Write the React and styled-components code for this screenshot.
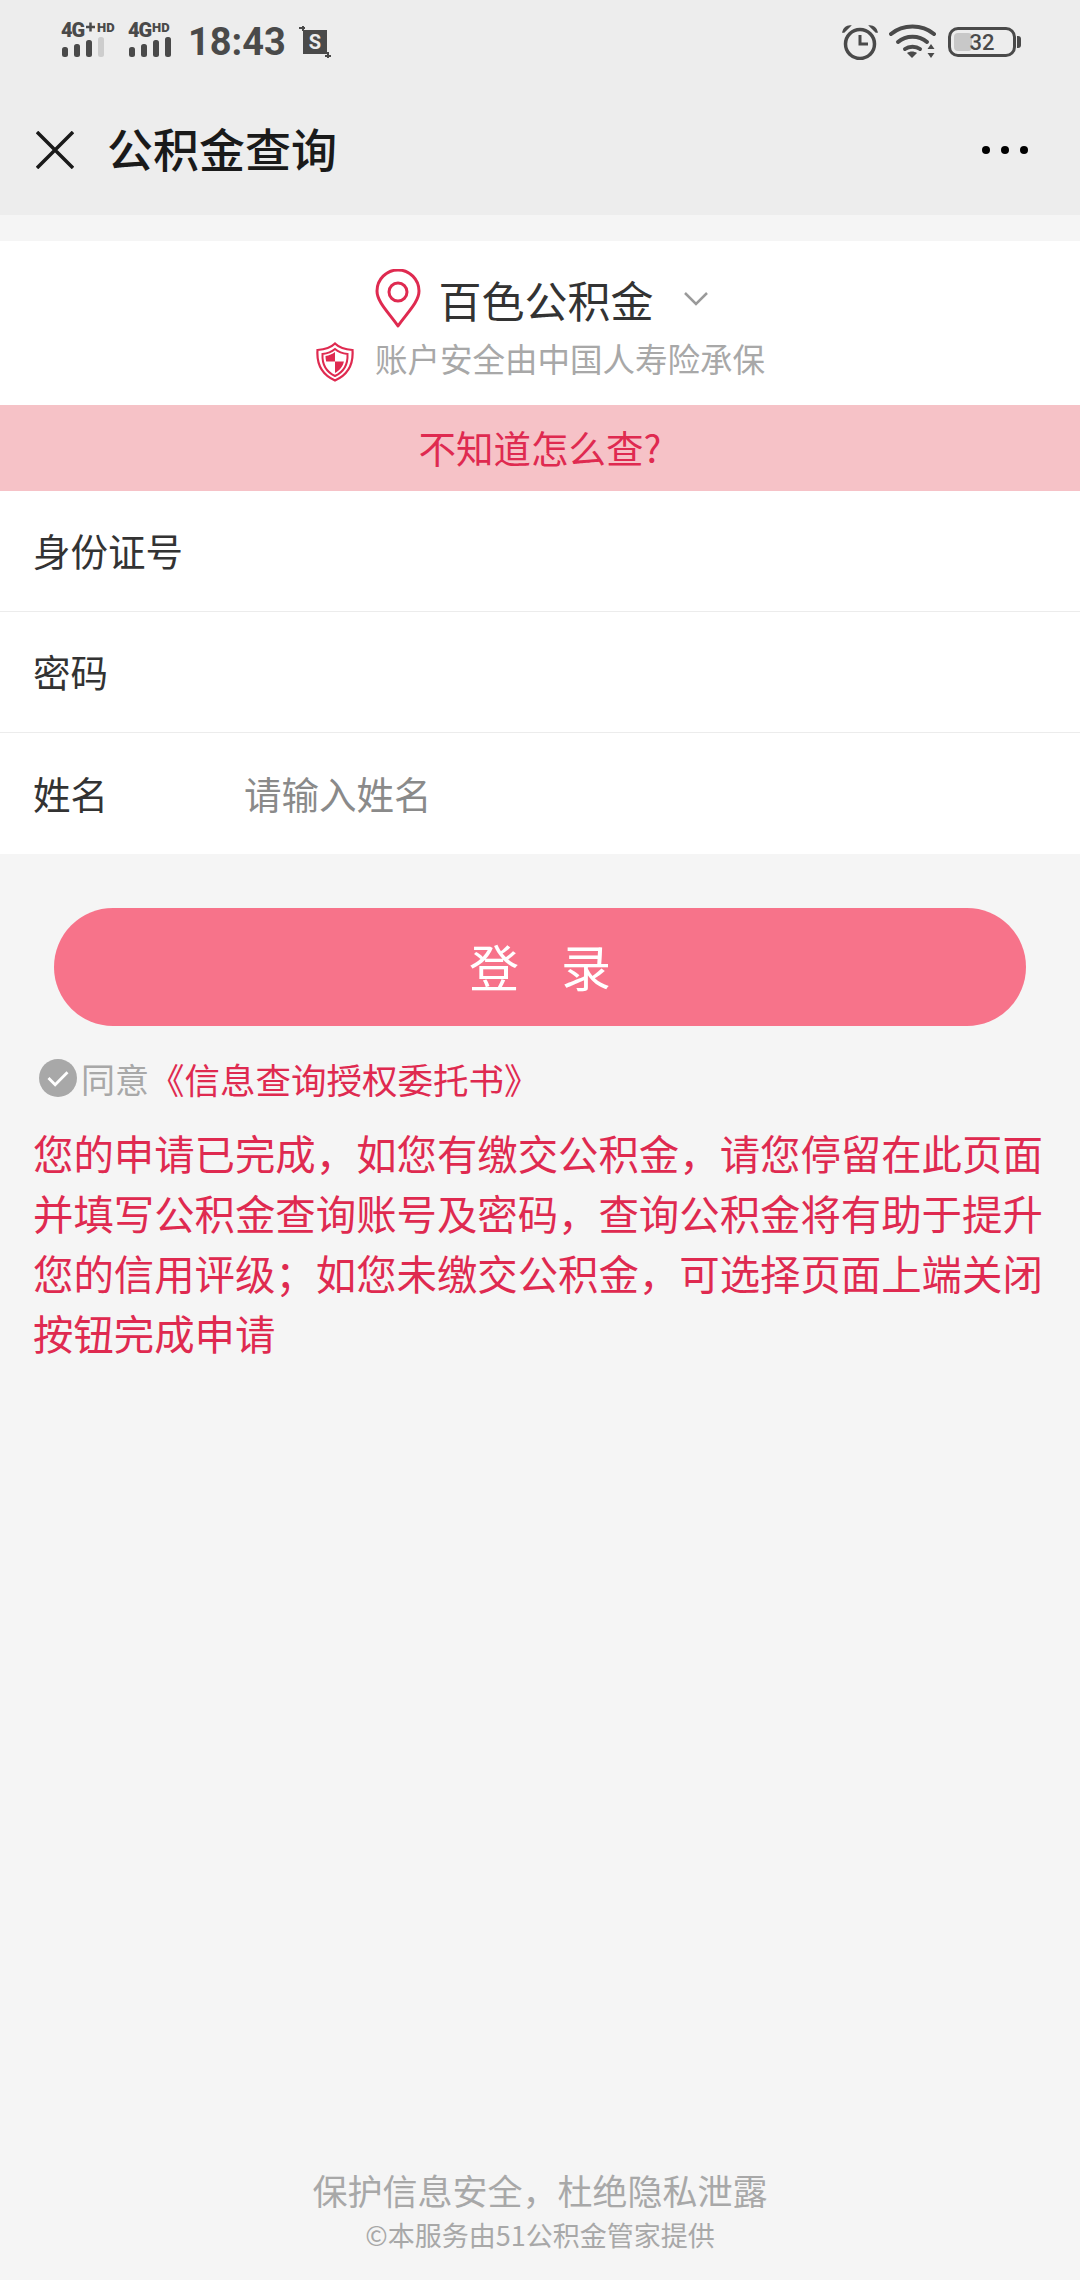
import React from "react";
import styled, { createGlobalStyle } from "styled-components";

const CJK = `"Noto Sans CJK SC", "Noto Sans", sans-serif`;

const GlobalStyle = createGlobalStyle`
  html, body {
    margin: 0;
    padding: 0;
    background: #f5f5f5;
  }
  * {
    box-sizing: border-box;
  }
`;

const SignalIcon = ({ plus, faded }) => (
  <svg width={plus ? 60 : 46} height="48" viewBox={plus ? "0 0 60 48" : "0 0 46 48"}>
    <text x="0" y="19" fontFamily="Roboto, sans-serif" fontWeight="900" fontSize="20" fill="#4a4a4a" letterSpacing="-1">
      4G
    </text>
    {plus && <path d="M25 9h9M29.500 4.500v9" stroke="#4a4a4a" strokeWidth="2.500" />}
    <text x={plus ? 36 : 24} y="14" fontFamily="Roboto, sans-serif" fontWeight="900" fontSize="13" fill="#4a4a4a">
      HD
    </text>
    <rect x="1" y="29" width="6" height="10" rx="2.500" fill="#4a4a4a" />
    <rect x="13" y="26" width="6" height="13" rx="2.500" fill="#4a4a4a" />
    <rect x="25" y="22" width="6" height="17" rx="2.500" fill="#4a4a4a" />
    <rect x="37" y="19" width="6" height="20" rx="2.500" fill={faded ? "#cdcdcd" : "#4a4a4a"} />
  </svg>
);

const ScreenshotIcon = () => (
  <svg width="34" height="34" viewBox="0 0 34 34">
    <rect x="5" y="5" width="24" height="24" fill="#4a4a4a" />
    <path d="M1 3h6M5 1v5M27 31h6M30 27v6" stroke="#4a4a4a" strokeWidth="2" />
    <text x="17" y="24" textAnchor="middle" fontFamily="Roboto, sans-serif" fontWeight="700" fontSize="20" fill="#ededed">S</text>
  </svg>
);

const AlarmIcon = () => (
  <svg width="36" height="36" viewBox="0 0 36 36" fill="none">
    <circle cx="18" cy="20" r="14.500" stroke="#4a4a4a" strokeWidth="3.500" />
    <path d="M18 11v9h8" stroke="#4a4a4a" strokeWidth="3" />
    <path d="M1 8c1-4 4-6 7-6l-6 6zM35 8c-1-4-4-6-7-6l6 6z" fill="#4a4a4a" stroke="#4a4a4a" strokeWidth="1.500" />
  </svg>
);

const WifiIcon = () => (
  <svg width="48" height="36" viewBox="0 0 48 36" fill="none">
    <path d="M2 10c12-10 31-10 43 0" stroke="#4a4a4a" strokeWidth="4" strokeLinecap="round" />
    <path d="M9 18c8-7 21-7 29 0" stroke="#4a4a4a" strokeWidth="4" strokeLinecap="round" />
    <path d="M16 25c4-3 11-3 15 0" stroke="#4a4a4a" strokeWidth="4" strokeLinecap="round" />
    <path d="M18 29c3-2 7-2 10 0l-5 5z" fill="#4a4a4a" />
    <path d="M42 20l3.500 5h-7zM42 34l3.500-5h-7z" fill="#4a4a4a" />
  </svg>
);

const PinIcon = () => (
  <svg width="46" height="60" viewBox="0 0 46 60" fill="none">
    <path d="M23 57C14 44 2 33 2 22a21 21 0 0 1 42 0c0 11-12 22-21 35z" stroke="#df2a50" strokeWidth="3" strokeLinejoin="round" />
    <circle cx="23" cy="23" r="9" stroke="#df2a50" strokeWidth="3" />
  </svg>
);

const ShieldIcon = () => (
  <ShieldSvg width="40" height="40" viewBox="0 0 40 40" fill="none">
    <path d="M20 1.500c4 4 11 6 17.500 6.500 1 14-5 25-17.500 30.500C7.500 33 1.500 22 2.500 8 9 7.500 16 5.500 20 1.500z" stroke="#df2a50" strokeWidth="2.200" />
    <path d="M20 7c3.500 3 8 4.500 12.500 5 .5 10-4 18-12.500 22-8.500-4-13-12-12.500-22C12 11.500 16.500 10 20 7z" fill="#fff" stroke="#df2a50" strokeWidth="2" />
    <path d="M20 10c-2.500 2-6 3.500-9.500 4 0 1.800.2 3.800.7 5.500H20zM20 19.500V31c4.800-2.700 8-6.700 8.900-11.500z" fill="#df2a50" />
  </ShieldSvg>
);

const Chevron = () => (
  <svg width="26" height="16" viewBox="0 0 26 16" fill="none">
    <path d="M2 2l11 11L24 2" stroke="#9a9a9a" strokeWidth="2.500" />
  </svg>
);

const CloseIcon = () => (
  <svg width="38" height="38" viewBox="0 0 38 38" fill="none">
    <path d="M1 1l36 36M37 1L1 37" stroke="#1a1a1a" strokeWidth="3.500" />
  </svg>
);

const CheckIcon = () => (
  <svg width="38" height="40" viewBox="0 0 40 42">
    <circle cx="20" cy="21" r="20" fill="#a8a8a8" />
    <path d="M10 21l7 7 13-13" fill="none" stroke="#fff" strokeWidth="3" />
  </svg>
);

const App = () => {
  return (
    <Page>
      <GlobalStyle />
      <TopArea>
        <StatusBar>
          <StatusGroup>
            <SignalIcon plus faded />
            <SignalIcon />
            <Clock>18:43</Clock>
            <ScreenshotIcon />
          </StatusGroup>
          <StatusGroup $gap="11px">
            <AlarmIcon />
            <WifiIcon />
            <Battery>
              <BatteryLevel />
              <BatteryText>32</BatteryText>
            </Battery>
          </StatusGroup>
        </StatusBar>
        <NavBar>
          <CloseIcon />
          <NavTitle>公积金查询</NavTitle>
          <Dots>
            <Dot />
            <Dot />
            <Dot />
          </Dots>
        </NavBar>
      </TopArea>

      <CityCard>
        <CityRow>
          <PinIcon />
          <CityName>百色公积金</CityName>
          <Chevron />
        </CityRow>
        <SafeRow>
          <ShieldIcon />
          <SafeText>账户安全由中国人寿险承保</SafeText>
        </SafeRow>
      </CityCard>

      <HelpBanner>不知道怎么查?</HelpBanner>

      <Form>
        <FieldRow>
          <FieldLabel>身份证号</FieldLabel>
        </FieldRow>
        <FieldRow>
          <FieldLabel>密码</FieldLabel>
        </FieldRow>
        <FieldRow>
          <FieldLabel>姓名</FieldLabel>
          <Placeholder>请输入姓名</Placeholder>
        </FieldRow>
      </Form>

      <LoginButton>登 录</LoginButton>

      <Agreement>
        <CheckIcon />
        <AgreeText>同意</AgreeText>
        <AgreeLink>《信息查询授权委托书》</AgreeLink>
      </Agreement>

      <Notice>
        您的申请已完成，如您有缴交公积金，请您停留在此页面并填写公积金查询账号及密码，查询公积金将有助于提升您的信用评级；如您未缴交公积金，可选择页面上端关闭按钮完成申请
      </Notice>

      <Footer>
        <FooterMain>保护信息安全，杜绝隐私泄露</FooterMain>
        <FooterSub>©本服务由51公积金管家提供</FooterSub>
      </Footer>
    </Page>
  );
};

const Page = styled.div`
  width: 1080px;
  height: 2280px;
  display: flex;
  flex-direction: column;
  background: #f5f5f5;
  font-family: ${CJK};
  overflow: hidden;
`;

const TopArea = styled.header`
  height: 215px;
  background: #ededed;
`;

const StatusBar = styled.div`
  height: 84px;
  padding: 0 60px 0 61px;
  display: flex;
  justify-content: space-between;
  align-items: center;
`;

const StatusGroup = styled.div`
  display: flex;
  align-items: center;
  gap: ${(p) => p.$gap || "7px"};
`;

const Clock = styled.span`
  font-family: Roboto, sans-serif;
  font-weight: 700;
  font-size: 38px;
  color: #4a4a4a;
  margin: 0 5px 0 7px;
`;

const Battery = styled.div`
  position: relative;
  width: 68px;
  height: 30px;
  border: 3px solid #4a4a4a;
  border-radius: 10px;
  padding: 3px;
  margin-right: 4px;

  &::after {
    content: "";
    position: absolute;
    right: -8px;
    top: 6px;
    width: 4px;
    height: 12px;
    background: #4a4a4a;
    border-radius: 0 3px 3px 0;
  }
`;

const BatteryLevel = styled.div`
  width: 32%;
  height: 100%;
  background: #c8c8c8;
  border-radius: 4px;
`;

const BatteryText = styled.span`
  position: absolute;
  inset: 0;
  display: flex;
  align-items: center;
  justify-content: center;
  font-family: Roboto, sans-serif;
  font-weight: 500;
  font-size: 22px;
  color: #4a4a4a;
`;

const NavBar = styled.div`
  height: 131px;
  padding: 0 52px 0 36px;
  display: flex;
  align-items: center;
`;

const NavTitle = styled.h1`
  margin: 0 0 6px 33px;
  font-size: 46px;
  font-weight: 500;
  color: #1a1a1a;
  line-height: 1;
`;

const Dots = styled.div`
  margin-left: auto;
  display: flex;
  gap: 11px;
`;

const Dot = styled.span`
  width: 8px;
  height: 8px;
  border-radius: 50%;
  background: #000;
`;

const CityCard = styled.section`
  margin-top: 26px;
  height: 164px;
  background: #fff;
  display: flex;
  flex-direction: column;
  align-items: center;
  padding-top: 28px;
`;

const CityRow = styled.div`
  display: flex;
  align-items: center;
  height: 60px;
  margin-left: 3px;
`;

const CityName = styled.span`
  font-size: 43px;
  color: #333;
  margin: 0 29px 0 18px;
`;

const SafeRow = styled.div`
  display: flex;
  align-items: center;
  margin-top: 4px;
`;

const ShieldSvg = styled.svg`
  margin-top: 9px;
`;

const SafeText = styled.span`
  font-size: 32.500px;
  color: #a8a8a8;
  margin-left: 20px;
`;

const HelpBanner = styled.div`
  height: 86px;
  padding-bottom: 3px;
  background: #f6c2c7;
  color: #df2a50;
  font-size: 37.500px;
  display: flex;
  align-items: center;
  justify-content: center;
`;

const Form = styled.section`
  background: #fff;
`;

const FieldRow = styled.div`
  height: 121px;
  padding: 0 0 3px 33px;
  display: flex;
  align-items: center;
  border-bottom: 1px solid #ececec;

  &:last-child {
    border-bottom: none;
  }
`;

const FieldLabel = styled.span`
  width: 211px;
  font-size: 37.500px;
  color: #333;
`;

const Placeholder = styled.span`
  font-size: 37.500px;
  color: #8a8a8a;
`;

const LoginButton = styled.button`
  margin: 54px 54px 0;
  height: 118px;
  padding: 0 0 5px;
  border: none;
  border-radius: 59px;
  background: #f7738a;
  color: #fff;
  font-family: ${CJK};
  font-size: 50px;
  word-spacing: 31px;
`;

const Agreement = styled.div`
  margin: 30px 0 0 39px;
  display: flex;
  align-items: center;
  height: 44px;
`;

const AgreeText = styled.span`
  color: #a8a8a8;
  font-size: 34px;
  margin-left: 4px;
`;

const AgreeLink = styled.span`
  color: #df2a50;
  font-size: 35.500px;
`;

const Notice = styled.p`
  margin: 23px 33px 0;
  font-size: 40.400px;
  line-height: 60px;
  color: #df2a50;
`;

const Footer = styled.footer`
  margin-top: auto;
  padding-bottom: 25px;
  display: flex;
  flex-direction: column;
  align-items: center;
  color: #a8a8a8;
`;

const FooterMain = styled.div`
  font-size: 35px;
  line-height: 50px;
`;

const FooterSub = styled.div`
  font-size: 27px;
  line-height: 40px;
`;

export default App;
